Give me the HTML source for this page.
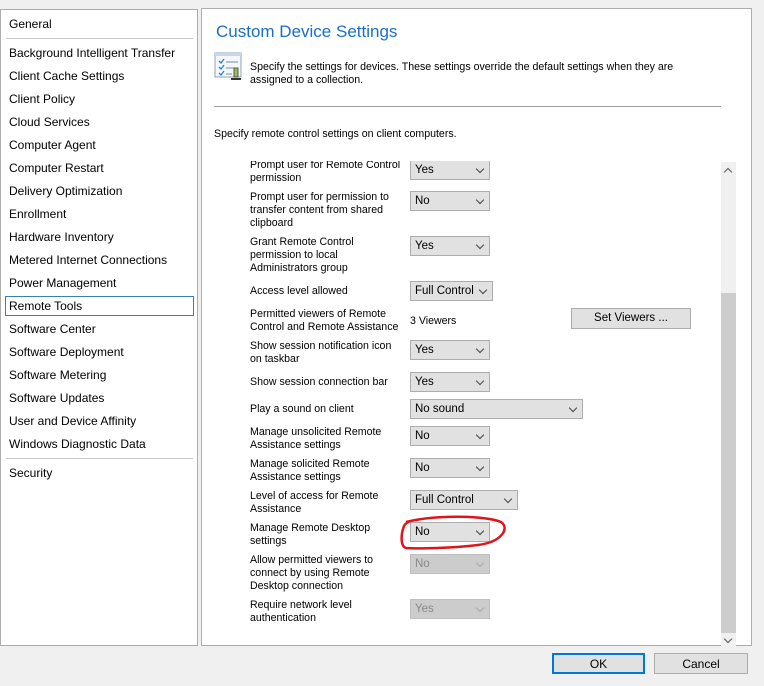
<!DOCTYPE html><html><head><style>
*{margin:0;padding:0;box-sizing:border-box}
body{width:764px;height:686px;background:#f0f0f0;font-family:"Liberation Sans",sans-serif;font-size:12px;color:#000;position:relative;overflow:hidden}
.a{position:absolute}
#left{left:0;top:9px;width:198px;height:637px;background:#fff;border:1px solid #adadad}
#left div.i{position:absolute;left:8px;font-size:12px;white-space:nowrap}
.sep{position:absolute;left:5px;width:187px;height:1px;background:#c8c8c8}
#right{left:201px;top:8px;width:551px;height:638px;background:#fff;border:1px solid #adadad}
.lb{position:absolute;left:250px;font-size:10.6px;line-height:13px;color:#000;white-space:nowrap}
.dd{position:absolute;left:410px;width:80px;height:20px;background:#e1e1e1;border:1px solid #adadad;font-size:11.5px;padding:3px 0 0 4px}
.dd:after{content:"";position:absolute;right:6px;top:5px;width:5px;height:5px;border-right:1px solid #444;border-bottom:1px solid #444;transform:rotate(45deg)}
.dis{background:#cccccc;border-color:#bfbfbf;color:#888}
.dis:after{border-color:#aaa}
.btn{position:absolute;background:#e1e1e1;border:1px solid #adadad;text-align:center;font-size:12px}
</style></head><body>
<div id="left" class="a">
<div class="i" style="top:7px">General</div>
<div class="sep" style="top:28px"></div>
<div class="i" style="top:36px">Background Intelligent Transfer</div>
<div class="i" style="top:59px">Client Cache Settings</div>
<div class="i" style="top:82px">Client Policy</div>
<div class="i" style="top:105px">Cloud Services</div>
<div class="i" style="top:128px">Computer Agent</div>
<div class="i" style="top:151px">Computer Restart</div>
<div class="i" style="top:174px">Delivery Optimization</div>
<div class="i" style="top:197px">Enrollment</div>
<div class="i" style="top:220px">Hardware Inventory</div>
<div class="i" style="top:243px">Metered Internet Connections</div>
<div class="i" style="top:266px">Power Management</div>
<div style="position:absolute;left:4px;top:286px;width:189px;height:20px;border:1px solid #3c7fb1"></div>
<div class="i" style="top:289px">Remote Tools</div>
<div class="i" style="top:312px">Software Center</div>
<div class="i" style="top:335px">Software Deployment</div>
<div class="i" style="top:358px">Software Metering</div>
<div class="i" style="top:381px">Software Updates</div>
<div class="i" style="top:404px">User and Device Affinity</div>
<div class="i" style="top:427px">Windows Diagnostic Data</div>
<div class="sep" style="top:448px"></div>
<div class="i" style="top:456px">Security</div>
</div>
<div id="right" class="a"></div>
<div class="a" style="left:216px;top:22px;font-size:17px;color:#1a6fc4">Custom Device Settings</div>
<svg class="a" style="left:214px;top:52px" width="30" height="30" viewBox="0 0 30 30"><rect x="1" y="1" width="26" height="24" fill="#f4f8fc" stroke="#8aa0b8"/><rect x="1" y="1" width="26" height="3" fill="#c8d8e8"/><path d="M5 9l2 2 3-4M5 15l2 2 3-4M5 21l2 2 3-4" stroke="#2b7fd0" fill="none" stroke-width="1.3"/><path d="M12 10h12M12 16h8M12 22h6" stroke="#7a8a9a"/><rect x="20" y="16" width="4" height="9" fill="#9bbf4a" stroke="#555"/><path d="M17 27h10" stroke="#333" stroke-width="2"/></svg>
<div class="a" style="left:250px;top:61px;font-size:10.6px;line-height:13px">Specify the settings for devices. These settings override the default settings when they are<br>assigned to a collection.</div>
<div class="a" style="left:214px;top:106px;width:507px;height:1px;background:#a0a0a0"></div>
<div class="a" style="left:214px;top:128px;font-size:10.6px">Specify remote control settings on client computers.</div>
<div class="a" style="left:214px;top:161px;width:522px;height:484px;overflow:hidden">
<div style="position:absolute;left:-214px;top:-161px;width:764px;height:686px">
<div class="lb" style="top:159px">Prompt user for Remote Control<br>permission</div><div class="dd" style="top:160px">Yes</div>
<div class="lb" style="top:191px">Prompt user for permission to<br>transfer content from shared<br>clipboard</div><div class="dd" style="top:191px">No</div>
<div class="lb" style="top:236px">Grant Remote Control<br>permission to local<br>Administrators group</div><div class="dd" style="top:236px">Yes</div>
<div class="lb" style="top:285px">Access level allowed</div><div class="dd" style="top:281px;width:83px">Full Control</div>
<div class="lb" style="top:308px">Permitted viewers of Remote<br>Control and Remote Assistance</div><div class="lb" style="left:410px;top:315px">3 Viewers</div>
<div class="btn" style="left:571px;top:308px;width:120px;height:21px;padding-top:3px;font-size:11.5px">Set Viewers ...</div>
<div class="lb" style="top:340px">Show session notification icon<br>on taskbar</div><div class="dd" style="top:340px">Yes</div>
<div class="lb" style="top:376px">Show session connection bar</div><div class="dd" style="top:372px">Yes</div>
<div class="lb" style="top:403px">Play a sound on client</div><div class="dd" style="top:399px;width:173px">No sound</div>
<div class="lb" style="top:426px">Manage unsolicited Remote<br>Assistance settings</div><div class="dd" style="top:426px">No</div>
<div class="lb" style="top:458px">Manage solicited Remote<br>Assistance settings</div><div class="dd" style="top:458px">No</div>
<div class="lb" style="top:490px">Level of access for Remote<br>Assistance</div><div class="dd" style="top:490px;width:108px">Full Control</div>
<div class="lb" style="top:522px">Manage Remote Desktop<br>settings</div><div class="dd" style="top:522px">No</div>
<div class="lb" style="top:554px">Allow permitted viewers to<br>connect by using Remote<br>Desktop connection</div><div class="dd dis" style="top:554px">No</div>
<div class="lb" style="top:599px">Require network level<br>authentication</div><div class="dd dis" style="top:599px">Yes</div>
</div></div>
<div class="a" style="left:721px;top:162px;width:15px;height:484px;background:#f0f0f0"></div>
<div class="a" style="left:721px;top:293px;width:15px;height:340px;background:#cdcdcd"></div>
<div class="a" style="left:725px;top:169px;width:6px;height:6px;border-left:1px solid #555;border-top:1px solid #555;transform:rotate(45deg)"></div>
<div class="a" style="left:725px;top:636px;width:6px;height:6px;border-right:1px solid #555;border-bottom:1px solid #555;transform:rotate(45deg)"></div>
<svg class="a" style="left:398px;top:512px" width="112" height="42"><path d="M8 10 C40 2,90 4,103 10 C112 16,104 30,80 33 C55 36,20 37,8 36 C2 34,3 22,6 14 C8 10,14 8,20 8" fill="none" stroke="#e0141c" stroke-width="2.5"/></svg>
<div class="btn" style="left:552px;top:653px;width:93px;height:21px;border:2px solid #0078d7;padding-top:2px">OK</div>
<div class="btn" style="left:654px;top:653px;width:94px;height:21px;padding-top:3px">Cancel</div>
</body></html>
